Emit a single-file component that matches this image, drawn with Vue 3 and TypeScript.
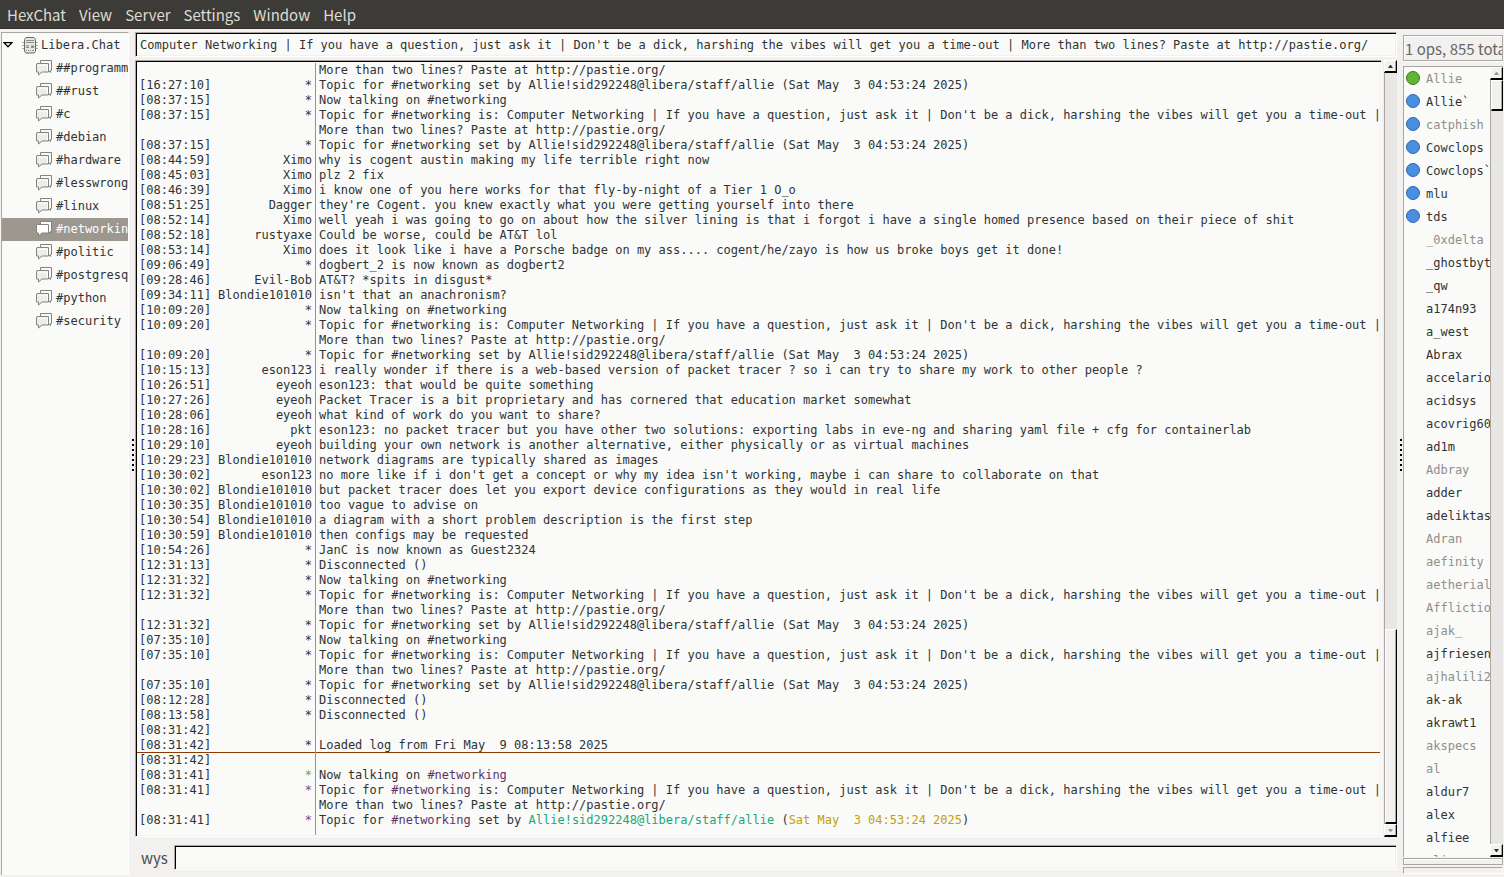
<script setup lang="ts">
import { ref } from 'vue'

interface Part { t: string; c?: string }
interface Line { time: string; nick: string; nc?: string; parts: Part[]; ruled?: boolean }

const menus = ['HexChat', 'View', 'Server', 'Settings', 'Window', 'Help']
const channels = ['##programming', '##rust', '#c', '#debian', '#hardware', '#lesswrong', '#linux', '#networking', '#politic', '#postgresql', '#python', '#security']
const active = ref('#networking')
const topic = ref("Computer Networking | If you have a question, just ask it | Don't be a dick, harshing the vibes will get you a time-out | More than two lines? Paste at http://pastie.org/")
const message = ref('')

const l = (time: string, nick: string, text: string): Line => ({ time, nick, parts: [{ t: text }] })
const head = "Computer Networking | If you have a question, just ask it | Don't be a dick, harshing the vibes will get you a time-out |"
const full = 'Topic for #networking is: ' + head
const setBy = 'Topic for #networking set by Allie!sid292248@libera/staff/allie (Sat May  3 04:53:24 2025)'
const now = 'Now talking on #networking'
const more = l('', '', 'More than two lines? Paste at http://pastie.org/')
const joined = (time: string): Line[] => [l(time, '*', now), l(time, '*', full), more, l(time, '*', setBy)]

const lines: Line[] = [
  more,
  l('16:27:10', '*', setBy),
  ...joined('08:37:15'),
  l('08:44:59', 'Ximo', 'why is cogent austin making my life terrible right now'),
  l('08:45:03', 'Ximo', 'plz 2 fix'),
  l('08:46:39', 'Ximo', 'i know one of you here works for that fly-by-night of a Tier 1 O_o'),
  l('08:51:25', 'Dagger', "they're Cogent. you knew exactly what you were getting yourself into there"),
  l('08:52:14', 'Ximo', 'well yeah i was going to go on about how the silver lining is that i forgot i have a single homed presence based on their piece of shit'),
  l('08:52:18', 'rustyaxe', 'Could be worse, could be AT&T lol'),
  l('08:53:14', 'Ximo', 'does it look like i have a Porsche badge on my ass.... cogent/he/zayo is how us broke boys get it done!'),
  l('09:06:49', '*', 'dogbert_2 is now known as dogbert2'),
  l('09:28:46', 'Evil-Bob', 'AT&T? *spits in disgust*'),
  l('09:34:11', 'Blondie101010', "isn't that an anachronism?"),
  ...joined('10:09:20'),
  l('10:15:13', 'eson123', 'i really wonder if there is a web-based version of packet tracer ? so i can try to share my work to other people ?'),
  l('10:26:51', 'eyeoh', 'eson123: that would be quite something'),
  l('10:27:26', 'eyeoh', 'Packet Tracer is a bit proprietary and has cornered that education market somewhat'),
  l('10:28:06', 'eyeoh', 'what kind of work do you want to share?'),
  l('10:28:16', 'pkt', 'eson123: no packet tracer but you have other two solutions: exporting labs in eve-ng and sharing yaml file + cfg for containerlab'),
  l('10:29:10', 'eyeoh', 'building your own network is another alternative, either physically or as virtual machines'),
  l('10:29:23', 'Blondie101010', 'network diagrams are typically shared as images'),
  l('10:30:02', 'eson123', "no more like if i don't get a concept or why my idea isn't working, maybe i can share to collaborate on that"),
  l('10:30:02', 'Blondie101010', 'but packet tracer does let you export device configurations as they would in real life'),
  l('10:30:35', 'Blondie101010', 'too vague to advise on'),
  l('10:30:54', 'Blondie101010', 'a diagram with a short problem description is the first step'),
  l('10:30:59', 'Blondie101010', 'then configs may be requested'),
  l('10:54:26', '*', 'JanC is now known as Guest2324'),
  l('12:31:13', '*', 'Disconnected ()'),
  ...joined('12:31:32'),
  ...joined('07:35:10'),
  l('08:12:28', '*', 'Disconnected ()'),
  l('08:13:58', '*', 'Disconnected ()'),
  l('08:31:42', '', ''),
  { ...l('08:31:42', '*', 'Loaded log from Fri May  9 08:13:58 2025'), ruled: true },
  l('08:31:42', '', ''),
  { time: '08:31:41', nick: '*', nc: 'green', parts: [{ t: 'Now talking on ' }, { t: '#networking', c: 'plum' }] },
  { time: '08:31:41', nick: '*', nc: 'plum', parts: [{ t: 'Topic for ' }, { t: '#networking', c: 'plum' }, { t: ' is: ' + head }] },
  more,
  { time: '08:31:41', nick: '*', nc: 'plum', parts: [{ t: 'Topic for ' }, { t: '#networking', c: 'plum' }, { t: ' set by ' }, { t: 'Allie!sid292248@libera/staff/allie', c: 'teal' }, { t: ' (' }, { t: 'Sat May  3 04:53:24 2025', c: 'gold' }, { t: ')' }] },
]

interface User { name: string; away?: boolean; badge?: string }
const away = new Set(['Allie', 'catphish', '_0xdelta', 'Adbray', 'Adran', 'aefinity', 'aetherial', 'Affliction', 'ajak_', 'ajhalili2', 'akspecs', 'al', 'alive'])
const users: User[] = ['Allie', 'Allie`', 'catphish', 'Cowclops', 'Cowclops`', 'mlu', 'tds', '_0xdelta', '_ghostbyte', '_qw', 'a174n93', 'a_west', 'Abrax', 'accelario', 'acidsys', 'acovrig60', 'ad1m', 'Adbray', 'adder', 'adeliktas', 'Adran', 'aefinity', 'aetherial', 'Affliction', 'ajak_', 'ajfriesen', 'ajhalili2', 'ak-ak', 'akrawt1', 'akspecs', 'al', 'aldur7', 'alex', 'alfiee', 'alive']
  .map((name, i) => ({ name, away: away.has(name), badge: i === 0 ? 'op' : i < 7 ? 'voice' : undefined }))
</script>

<template>
  <div class="window">
    <nav class="menubar" aria-label="Main menu">
      <button v-for="m in menus" :key="m" type="button">{{ m }}</button>
    </nav>
    <div class="body">
      <aside class="tree">
        <button type="button" class="server">
          <svg class="arrow" width="10" height="6" viewBox="0 0 10 6"><path d="M1 .7h8L5 4.8z" fill="#fff" stroke="#000" stroke-width="1.3" /></svg>
          <svg class="host" width="16" height="17" viewBox="0 0 16 17">
            <path d="M0 5.5h2M0 8.5h2M0 11.5h2M14 5.5h2M14 8.5h2M14 11.5h2" stroke="#aaa" />
            <path d="M4 .5h8l1.500 2v12l-1.500 1.500H4l-1.500-1.500v-12z" fill="#e4e4e2" stroke="#666864" />
            <path d="M4 3.500h8M4 5.500h8" stroke="#8d8f8a" />
            <path d="M4.500 8h2v1h-2zM4 9.500h3v1.500H4zM9 8.500h3V11H9zM4 13h1v1H4zM6 13h1v1H6zM8 13h1v1H8zM10 13h2v1h-2z" fill="#8d8f8a" />
          </svg>
          <span>Libera.Chat</span>
        </button>
        <button v-for="c in channels" :key="c" type="button" class="channel" :class="{ active: c === active }" @click="active = c">
          <svg width="17" height="16" viewBox="0 0 17 16">
            <path class="bubble" d="M4.500.5h11v10h-1v2l-2-2h-8z" fill="#fafaf9" />
            <path class="bubble" d="M1 3.500h11.500v8.500H6l-3.500 3v-3H.5V4z" fill="#ececeb" />
            <path d="M2 5h9.500v6" fill="none" stroke="#fff" />
          </svg>
          <span>{{ c }}</span>
        </button>
      </aside>
      <div class="grip" aria-hidden="true"><i v-for="n in 7" :key="n"></i></div>
      <main class="center">
        <input v-model="topic" class="field topic" aria-label="Topic">
        <div class="chat">
          <div class="log">
            <div v-for="(row, i) in lines" :key="i" class="line" :class="{ ruled: row.ruled }">
              <span class="time">{{ row.time ? '[' + row.time + ']' : '' }}</span>
              <span class="nick" :class="row.nc">{{ row.nick }}</span>
              <span class="text"><span v-for="(p, j) in row.parts" :key="j" :class="p.c">{{ p.t }}</span></span>
            </div>
            <div class="rest"></div>
          </div>
          <div class="scroll">
            <button type="button" aria-label="Scroll up"><svg width="5" height="3"><path d="M0 3h5L3 0H2z" fill="#333" /></svg></button>
            <div class="track"><div class="thumb low"></div></div>
            <button type="button" aria-label="Scroll down"><svg width="5" height="3"><path d="M0 0h5L3 3H2z" fill="#999" /></svg></button>
          </div>
        </div>
        <div class="entry">
          <label for="message">wys</label>
          <input id="message" v-model="message" class="field">
        </div>
      </main>
      <div class="grip" aria-hidden="true"><i v-for="n in 7" :key="n"></i></div>
      <aside class="people">
        <div class="count">1 ops, 855 total</div>
        <div class="userbox">
          <ul>
            <li v-for="u in users" :key="u.name" :class="{ away: u.away }">
              <i class="badge" :class="u.badge"></i><span>{{ u.name }}</span>
            </li>
          </ul>
          <div class="scroll">
            <button type="button" aria-label="Scroll up"><svg width="5" height="3"><path d="M0 3h5L3 0H2z" fill="#999" /></svg></button>
            <div class="track"><div class="thumb high"></div></div>
            <button type="button" aria-label="Scroll down"><svg width="5" height="3"><path d="M0 0h5L3 3H2z" fill="#333" /></svg></button>
          </div>
        </div>
        <div class="meter lag"></div>
        <div class="meter queue"></div>
      </aside>
    </div>
  </div>
</template>

<style>
body { margin: 0; background: #f2f1f0; }
</style>

<style scoped>
* { box-sizing: border-box; }
button { border: 0; padding: 0; margin: 0; background: none; font: inherit; color: inherit; text-align: left; }
.window { height: 100vh; display: flex; flex-direction: column; overflow: hidden; background: #f2f1f0; color: #2e3436; font: 12px/15px "DejaVu Sans Mono", monospace; }
.menubar { flex: none; height: 29px; display: flex; align-items: center; gap: 13px; padding: 2px 7px 0; background: #3c3b37; border-bottom: 1px solid #35302e; color: #dfdbd2; font: 15px/24px "Noto Sans CJK SC", sans-serif; }
.body { flex: 1; min-height: 0; display: flex; }
.tree { flex: none; width: 128px; margin: 3px 0 2px 1px; padding-top: 1px; border: solid; border-width: 1px 1px 0 1px; border-color: #aaa6a2 #fff #fff #aaa6a2; background: #fafaf8; overflow: hidden; }
.tree button { display: flex; align-items: center; width: 100%; height: 23px; white-space: nowrap; overflow: hidden; }
.tree svg, .tree span { flex: none; }
.arrow { margin: 0 9px 2px 1px; }
.host { margin-right: 3px; }
.channel { padding-left: 34px; gap: 3px; }
.channel svg { margin-bottom: 2px; }
.bubble { stroke: #82847f; }
.tree .active { background: #9c9890; color: #fff; }
.active .bubble { stroke: #84827c; fill: #fff; }
.grip { flex: none; width: 6px; padding: 3px 1px 0 0; display: flex; flex-direction: column; align-items: flex-end; justify-content: center; gap: 3px; }
.grip i { width: 2px; height: 2px; background: #000; }
.center { flex: 1; min-width: 0; display: flex; flex-direction: column; padding: 3px 0 7px; }
.field, .log { border: 1px solid; border-color: #aaa6a2 #fff #fff #aaa6a2; border-radius: 0; outline: 0; background: #fafaf8; box-shadow: inset 1px 1px #000, inset -1px -1px #f2f1f0; }
.field { color: inherit; font: inherit; padding: 0 4px; }
.topic { flex: none; height: 25px; width: 100%; }
.chat { flex: 1; min-height: 0; display: flex; gap: 2px; margin: 3px 0 8px; }
.log { flex: 1; min-width: 0; display: flex; flex-direction: column; overflow: hidden; padding: 2px 1px 1px; }
.line { flex: none; display: grid; grid-template-columns: 72px 105px 1fr; height: 15px; padding-left: 2px; }
.nick { text-align: right; padding-right: 3px; border-right: 1px solid #9090a0; }
.text { white-space: pre; padding-left: 3px; min-width: 0; }
.ruled { border-bottom: 1px solid #8f3902; }
.rest { flex: 1; width: 179px; border-right: 1px solid #9090a0; }
.green { color: #6aa82a; }
.nick.plum { color: #75507b; }
.text .plum { color: #5c3566; }
.teal { color: #1ba67a; }
.gold { color: #c4a000; }
.nick.green, .nick.plum { border-color: #9090a0; }
.scroll { flex: none; width: 13px; display: flex; flex-direction: column; }
.scroll button { flex: none; height: 13px; display: flex; align-items: center; justify-content: center; }
.scroll button, .thumb { border: solid; border-width: 1px 1px 2px 1px; border-color: #fff #000 #000 #fff; background: #f2f1f0; box-shadow: inset -1px 0 #aaa6a2; }
.track { flex: 1; display: flex; flex-direction: column; border-left: 1px solid #aaa6a2; background: #e8e7e6; }
.low { margin-top: auto; height: 26%; }
.high { height: 31px; }
.entry { flex: none; display: flex; height: 25px; }
.entry label { width: 39px; padding-left: 6px; color: #4c4c4c; font: 15px/25px "Noto Sans CJK SC", sans-serif; }
.entry .field { flex: 1; min-width: 0; }
.people { flex: none; width: 101px; display: flex; flex-direction: column; padding: 6px 1px 3px 0; }
.count { flex: none; height: 26px; padding-left: 1px; border: 1px solid #aaa6a2; box-shadow: inset 1px 1px #fff, 0 1px #fff; color: #666; font: 15px/26px "Noto Sans CJK SC", sans-serif; white-space: nowrap; overflow: hidden; }
.userbox { flex: 1; min-height: 0; display: flex; margin-top: 5px; border: solid #aaa6a2; border-width: 1px 0 0 1px; background: #fafaf8; }
ul { flex: 1; min-width: 0; margin: 0; padding: 1px 0 0; list-style: none; overflow: hidden; }
li { display: flex; align-items: center; height: 23px; padding-left: 2px; gap: 6px; white-space: nowrap; }
.away { color: #8f8f8b; }
.badge { flex: none; width: 14px; height: 14px; margin-bottom: 4px; border-radius: 50%; }
.op { background: #5fb535; border: 1px solid #3a7d1a; }
.voice { background: #4a8ee0; border: 1px solid #2f66b5; }
.meter { flex: none; height: 7px; border: 1px solid #aaa6a2; }
.lag { margin-top: 1px; box-shadow: inset 1px 1px #fff; }
.queue { margin-top: 2px; border-color: #aaa6a2 #fff #fff #aaa6a2; }
</style>
